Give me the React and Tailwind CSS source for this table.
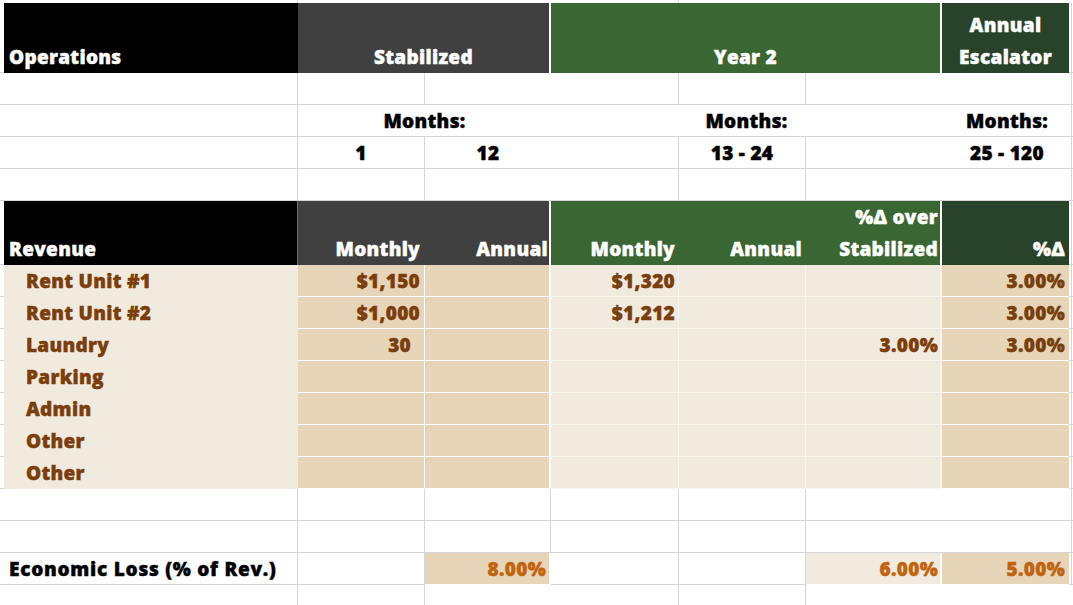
import React from "react";

const font = "font-['Open_Sans',sans-serif] font-extrabold text-[19px] leading-[32px] tracking-[0.3px] [-webkit-text-stroke:0.45px_currentColor]";

const G = "border-[#d6d6d6]";

function Strip() {
  return <div className={`w-[4px] shrink-0 border-b ${G}`} />;
}
function RStrip() {
  return (
    <div className="flex w-[4px] shrink-0">
      <div className={`w-[2px] border-b ${G}`} />
      <div className={`w-[2px] border-b border-l ${G}`} />
    </div>
  );
}

function WhiteRow({ lines, h = "h-[32px]" }) {
  const widths = ["w-[294px]", "w-[127px]", "w-[126px]", "w-[128px]", "w-[127px]", "w-[136px]", "w-[127px]"];
  return (
    <div className={`flex ${h}`}>
      <Strip />
      {widths.map((w, i) => (
        <div key={i} className={`${w} shrink-0 border-b ${G} ${lines[i] ? "border-r" : ""}`} />
      ))}
      <RStrip />
    </div>
  );
}

const brown = "text-[#7a3e0c]";
const orange = "text-[#c0640f]";
const dark = "bg-[#e6d5b9]";
const light = "bg-[#f1eadf]";

function BodyRow({ label, b, d, f, g }) {
  return (
    <div className="flex h-[32px]">
      <Strip />
      <div className={`w-[294px] shrink-0 ${light} pl-[22px] ${brown} ${font}`}>{label}</div>
      <div className={`w-[127px] shrink-0 ${dark} border-r border-b border-white text-right pr-[4px] ${brown} ${font}`}>{b}</div>
      <div className={`w-[126px] shrink-0 ${dark} border-r-2 border-b border-white`} />
      <div className={`w-[128px] shrink-0 ${light} border-r border-b border-[#f8f4ee] text-right pr-[3px] ${brown} ${font}`}>{d}</div>
      <div className={`w-[127px] shrink-0 ${light} border-r border-b border-[#f8f4ee]`} />
      <div className={`w-[136px] shrink-0 ${light} border-r-2 border-b border-[#f8f4ee] text-right pr-[2px] ${brown} ${font}`}>{f}</div>
      <div className={`w-[127px] shrink-0 ${dark} border-b border-white text-right pr-[4px] ${brown} ${font}`}>{g}</div>
      <RStrip />
    </div>
  );
}

export default function App() {
  return (
    <div className="w-[1073px] h-[605px] overflow-hidden bg-white">
      <div className={`h-[3px] flex`}>
        <div className="w-[4px]" />
        <div className={`w-[294px] border-r ${G}`} />
        <div className={`w-[253px] `} />
        <div className={`w-[128px] border-r ${G}`} />
        <div className={`w-[127px]`} />
      </div>
      {/* header 1 */}
      <div className="flex h-[70px]">
        <Strip />
        <div className={`w-[294px] shrink-0 bg-black flex items-end pl-[5px] text-white ${font}`}>Operations</div>
        <div className={`w-[253px] shrink-0 bg-[#404040] border-r-2 border-white flex items-end justify-center text-white ${font}`}>Stabilized</div>
        <div className={`w-[391px] shrink-0 bg-[#3a6633] border-r-2 border-white flex items-end justify-center text-white ${font}`}>Year 2</div>
        <div className={`w-[127px] shrink-0 bg-[#29432a] flex flex-col justify-end items-center text-white ${font}`}>
          <div>Annual</div>
          <div>Escalator</div>
        </div>
        <RStrip />
      </div>
      <WhiteRow lines={[1, 1, 0, 1, 1, 0, 0]} />
      {/* Months row */}
      <div className="flex h-[32px]">
        <Strip />
        <div className={`w-[294px] shrink-0 border-r border-b ${G}`} />
        <div className={`w-[253px] shrink-0 border-b ${G} text-center text-black ${font}`}>Months:</div>
        <div className={`w-[391px] shrink-0 border-b ${G} text-center text-black ${font}`}>Months:</div>
        <div className={`w-[127px] shrink-0 border-b ${G} text-center text-black pl-[3px] ${font}`}>Months:</div>
        <RStrip />
      </div>
      {/* numbers row */}
      <div className="flex h-[32px]">
        <Strip />
        <div className={`w-[294px] shrink-0 border-r border-b ${G}`} />
        <div className={`w-[127px] shrink-0 border-r border-b ${G} text-center text-black ${font}`}>1</div>
        <div className={`w-[126px] shrink-0 border-b ${G} text-center text-black ${font}`}>12</div>
        <div className={`w-[128px] shrink-0 border-r border-b ${G}`} />
        <div className={`w-[127px] shrink-0 border-r border-b ${G} text-center text-black ${font}`}>13 - 24</div>
        <div className={`w-[136px] shrink-0 border-b ${G}`} />
        <div className={`w-[127px] shrink-0 border-b ${G} text-center text-black pl-[3px] ${font}`}>25 - 120</div>
        <RStrip />
      </div>
      <WhiteRow lines={[1, 1, 0, 1, 1, 0, 0]} />
      {/* header 2 */}
      <div className="flex h-[64px]">
        <Strip />
        <div className={`w-[294px] shrink-0 bg-black border-r border-[#6b6b6b] flex items-end pl-[5px] text-white ${font}`}>Revenue</div>
        <div className={`w-[127px] shrink-0 bg-[#404040] flex items-end justify-end pr-[5px] text-white ${font}`}>Monthly</div>
        <div className={`w-[126px] shrink-0 bg-[#404040] border-r-2 border-white flex items-end justify-end pr-[1px] text-white ${font}`}>Annual</div>
        <div className={`w-[128px] shrink-0 bg-[#3a6633] flex items-end justify-end pr-[4px] text-white ${font}`}>Monthly</div>
        <div className={`w-[127px] shrink-0 bg-[#3a6633] flex items-end justify-end pr-[4px] text-white ${font}`}>Annual</div>
        <div className={`w-[136px] shrink-0 bg-[#3a6633] border-r-2 border-white flex flex-col justify-end items-end pr-[2px] text-white ${font}`}>
          <div>%Δ over</div>
          <div>Stabilized</div>
        </div>
        <div className={`w-[127px] shrink-0 bg-[#29432a] flex items-end justify-end pr-[4px] text-white ${font}`}>%Δ</div>
        <RStrip />
      </div>
      <BodyRow label="Rent Unit #1" b="$1,150" d="$1,320" g="3.00%" />
      <BodyRow label="Rent Unit #2" b="$1,000" d="$1,212" g="3.00%" />
      <BodyRow label="Laundry" b={<span className="pr-[9px]">30</span>} f="3.00%" g="3.00%" />
      <BodyRow label="Parking" />
      <BodyRow label="Admin" />
      <BodyRow label="Other" />
      <BodyRow label="Other" />
      <WhiteRow lines={[1, 1, 1, 1, 1, 0, 0]} />
      <WhiteRow lines={[1, 1, 1, 1, 1, 0, 0]} />
      {/* economic loss */}
      <div className="flex h-[32px]">
        <Strip />
        <div className={`w-[294px] shrink-0 border-r border-b ${G} pl-[5px] text-black ${font}`}>
          <span className="tracking-[0.75px]">Economic Loss (% of Rev.)</span>
        </div>
        <div className={`w-[127px] shrink-0 border-r border-b ${G}`} />
        <div className={`w-[126px] shrink-0 ${dark} border-r-2 border-b border-white text-right pr-[3px] ${orange} ${font}`}>8.00%</div>
        <div className={`w-[128px] shrink-0 border-r border-b ${G}`} />
        <div className={`w-[127px] shrink-0 border-r border-b ${G}`} />
        <div className={`w-[136px] shrink-0 ${light} border-r-2 border-b border-white text-right pr-[2px] ${orange} ${font}`}>6.00%</div>
        <div className={`w-[127px] shrink-0 ${dark} border-b border-white text-right pr-[4px] ${orange} ${font}`}>5.00%</div>
        <RStrip />
      </div>
      <div className="flex h-[20px]">
        <div className="w-[4px]" />
        <div className={`w-[294px] border-r ${G}`} />
        <div className={`w-[127px] border-r ${G}`} />
        <div className="w-[126px]" />
        <div className={`w-[128px] border-r ${G}`} />
        <div className={`w-[127px] border-r ${G}`} />
      </div>
    </div>
  );
}
